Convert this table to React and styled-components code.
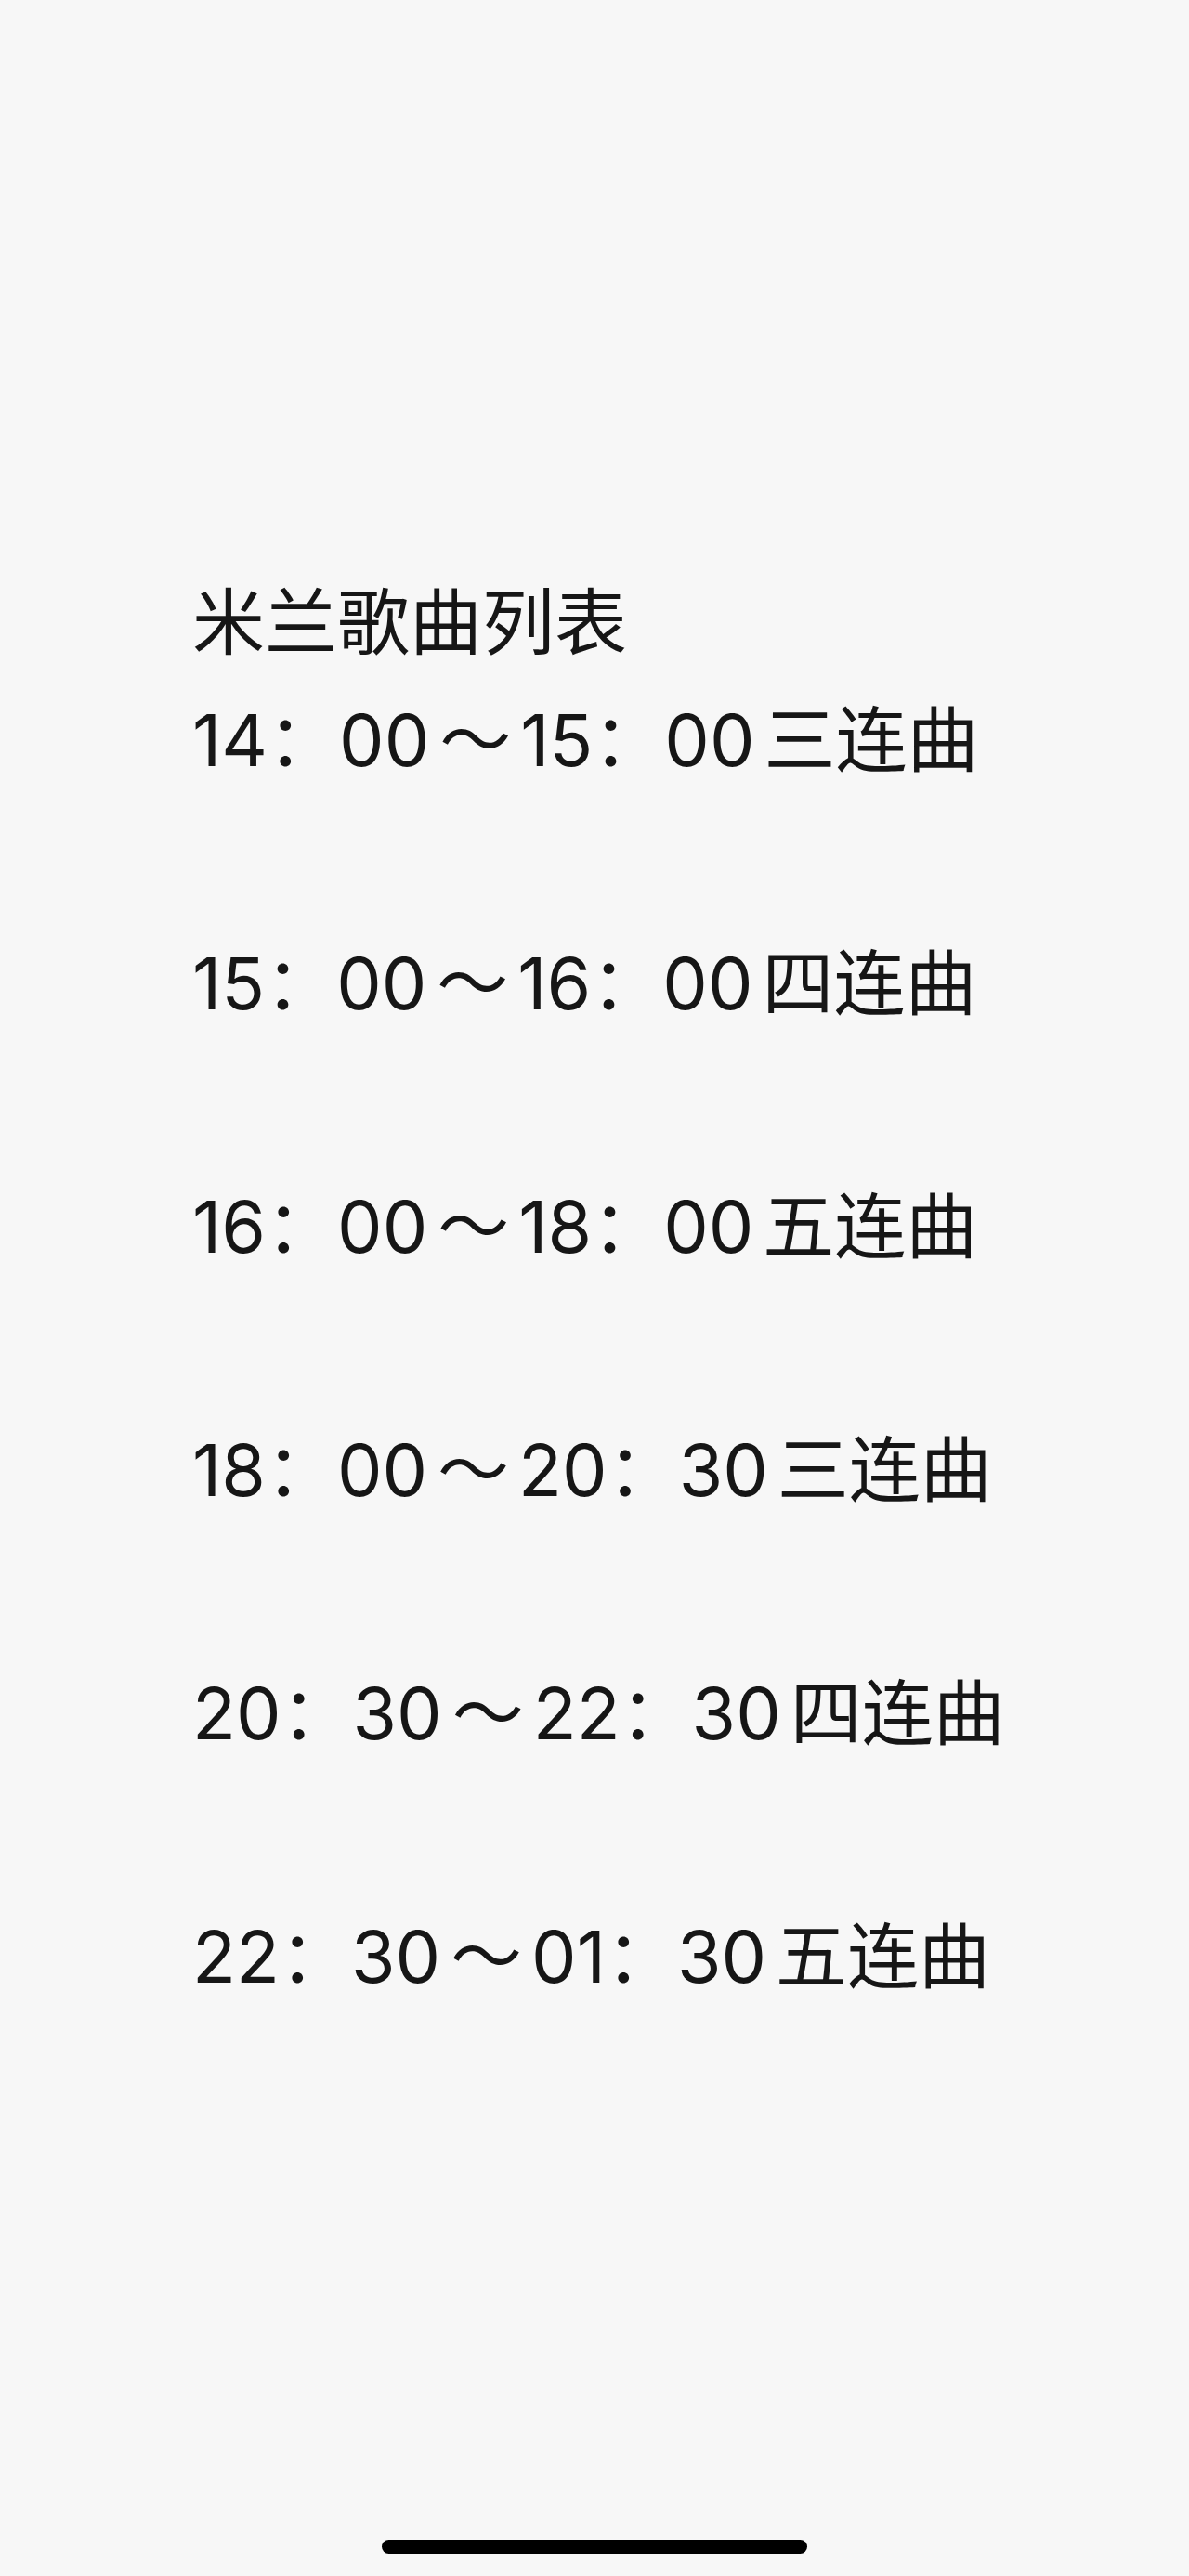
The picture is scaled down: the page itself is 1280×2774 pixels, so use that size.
import React from 'react';
import styled, { createGlobalStyle } from 'styled-components';

const GlobalStyle = createGlobalStyle`
  html, body {
    margin: 0;
    padding: 0;
    background: #f7f7f7;
  }
`;

const Page = styled.div`
  position: relative;
  min-height: 2774px;
  box-sizing: border-box;
  padding: 619px 0 0 207px;
  background: #f7f7f7;
  color: #161616;
  font-family: Inter, "Noto Sans CJK SC", sans-serif;
`;

const Title = styled.h1`
  margin: 0;
  font-family: "Noto Sans CJK SC", sans-serif;
  font-size: 78px;
  font-weight: 400;
  line-height: 92px;
  height: 92px;
`;

const List = styled.ul`
  list-style: none;
  margin: 35px 0 0;
  padding: 0;
  display: flex;
  flex-direction: column;
  gap: 170px;
`;

const Row = styled.li`
  display: flex;
  align-items: baseline;
  font-size: 77px;
  line-height: 92px;
  height: 92px;
  white-space: nowrap;
`;

const Tilde = styled.span`
  margin: 0 10px 0 11px;
  font-family: "Noto Sans CJK SC", sans-serif;
`;

const Label = styled.span`
  margin-left: 10px;
  font-family: "Noto Sans CJK SC", sans-serif;
`;

const HomeBar = styled.div`
  position: absolute;
  left: 411px;
  bottom: 24px;
  width: 458px;
  height: 15px;
  border-radius: 8px;
  background: #000;
`;

const songs = [
  { from: '14：00', to: '15：00', label: '三连曲' },
  { from: '15：00', to: '16：00', label: '四连曲' },
  { from: '16：00', to: '18：00', label: '五连曲' },
  { from: '18：00', to: '20：30', label: '三连曲' },
  { from: '20：30', to: '22：30', label: '四连曲' },
  { from: '22：30', to: '01：30', label: '五连曲' },
];

const App = () => {
  return (
    <>
      <GlobalStyle />
      <Page>
        <Title>米兰歌曲列表</Title>
        <List>
          {songs.map((s) => (
            <Row key={s.from}>
              <span>{s.from}</span>
              <Tilde>～</Tilde>
              <span>{s.to}</span>
              <Label>{s.label}</Label>
            </Row>
          ))}
        </List>
        <HomeBar />
      </Page>
    </>
  );
};

export default App;
